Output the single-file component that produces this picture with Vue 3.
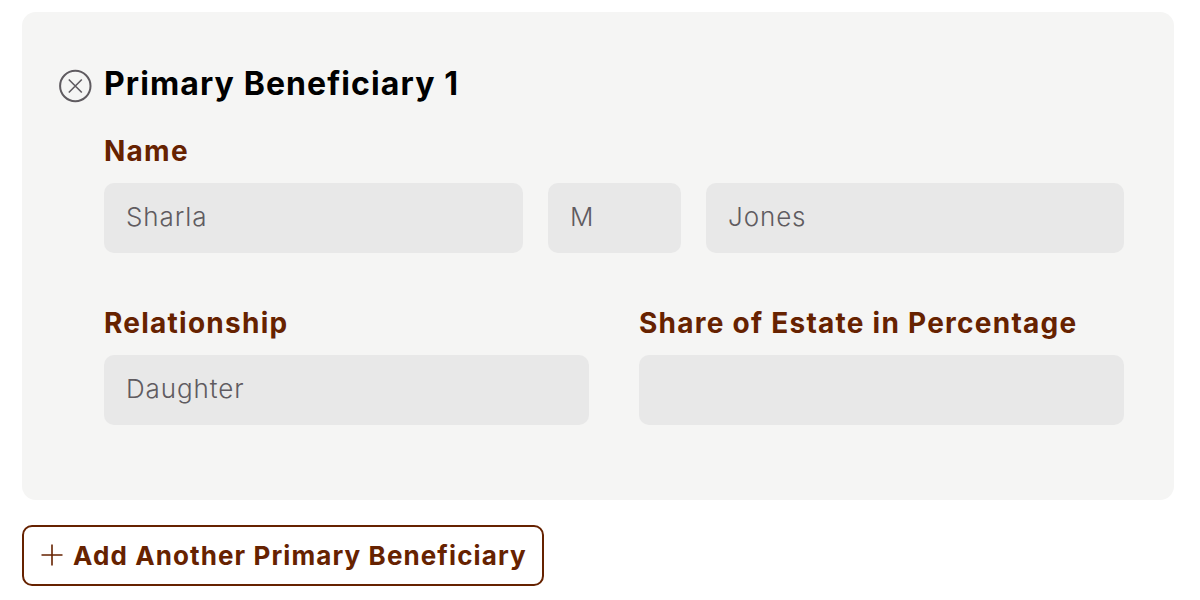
<script setup>
const nameFields = [
  { id: 'first', value: 'Sharla' },
  { id: 'middle', value: 'M' },
  { id: 'last', value: 'Jones' }
]
</script>

<template>
  <div class="page">
    <section class="card">
      <div class="card-hd">
        <svg class="remove" width="33" height="34" viewBox="0 0 33 34" fill="none">
          <circle cx="16.3" cy="17" r="15.2" stroke="#5f5b60" stroke-width="2" />
          <path d="M9.8 10.5 22.8 23.5M22.8 10.5 9.8 23.5" stroke="#5f5b60" stroke-width="1.6" />
        </svg>
        <h2 class="title">Primary Beneficiary 1</h2>
      </div>
      <div class="body">
        <div class="label">Name</div>
        <div class="name-row">
          <div v-for="f in nameFields" :key="f.id" class="input">{{ f.value }}</div>
        </div>
        <div class="two-col">
          <div>
            <div class="label">Relationship</div>
            <div class="input">Daughter</div>
          </div>
          <div>
            <div class="label">Share of Estate in Percentage</div>
            <div class="input"></div>
          </div>
        </div>
      </div>
    </section>
    <button class="add-btn" type="button">
      <svg width="24" height="24" viewBox="0 0 24 24" fill="none">
        <path d="M12 1.5V22.5M1.5 12H22.5" stroke="#662200" stroke-width="1.6" />
      </svg>
      <span>Add Another Primary Beneficiary</span>
    </button>
  </div>
</template>

<style>
body { background: #fff; }
</style>

<style scoped>
.page {
  width: 1200px;
  height: 600px;
  box-sizing: border-box;
  padding: 12px 26px 0 22px;
  overflow: hidden;
  font-family: Inter, "Liberation Sans", sans-serif;
}
.card {
  height: 488px;
  box-sizing: border-box;
  padding: 50px 50px 0 37px;
  background: #f5f5f4;
  border-radius: 14px;
}
.card-hd {
  display: flex;
  align-items: center;
  gap: 12px;
  height: 44px;
}
.remove { margin-top: 4px; flex-shrink: 0; }
.title {
  margin: -2px 0 0;
  font-size: 32px;
  font-weight: 700;
  letter-spacing: 1.1px;
  color: #000;
  white-space: nowrap;
}
.body {
  margin-left: 45px;
  margin-top: 29px;
}
.label {
  height: 32px;
  margin-bottom: 16px;
  font-size: 28px;
  line-height: 32px;
  font-weight: 700;
  letter-spacing: 1.25px;
  color: #662200;
  white-space: nowrap;
}
.name-row {
  display: grid;
  grid-template-columns: 419px 133px 1fr;
  gap: 25px;
}
.two-col {
  display: grid;
  grid-template-columns: 1fr 1fr;
  gap: 50px;
  margin-top: 54px;
}
.input {
  height: 70px;
  box-sizing: border-box;
  padding: 0 22px 3px;
  display: flex;
  align-items: center;
  background: #e8e8e8;
  border-radius: 10px;
  font-size: 26px;
  font-weight: 300;
  letter-spacing: 0.9px;
  color: #5f5b60;
}
.add-btn {
  display: flex;
  align-items: center;
  gap: 9px;
  width: 522px;
  height: 61px;
  margin-top: 25px;
  padding: 0 0 1px 16px;
  box-sizing: border-box;
  background: #fff;
  border: 2px solid #662200;
  border-radius: 10px;
  font-family: inherit;
  font-size: 26px;
  font-weight: 700;
  letter-spacing: 1.1px;
  color: #662200;
  white-space: nowrap;
}
</style>
